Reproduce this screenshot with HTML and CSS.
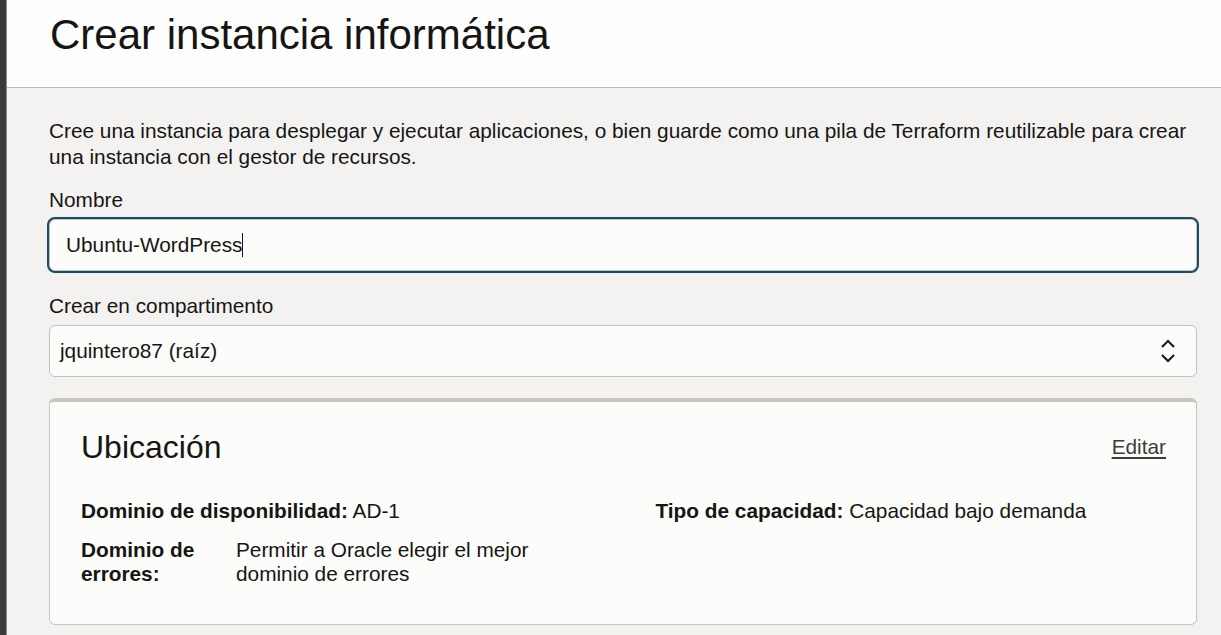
FILE: index.html
```html
<!DOCTYPE html>
<html>

	<head>
		<meta charset="UTF-8">
		<title>Crear instancia informática</title>
		<link rel="stylesheet" href="styles.css">
	</head>

	<body>
		<div class="shell">
			<div class="rail"></div>
			<div class="main">
				<div class="header">
					<h1>Crear instancia informática</h1>
				</div>
				<div class="content">
					<p class="intro">Cree una instancia para desplegar y ejecutar aplicaciones, o bien guarde como una pila de Terraform reutilizable para crear una instancia con el gestor de recursos.</p>

					<label class="label">Nombre</label>
					<div class="field focused">Ubuntu-WordPress<span class="caret"></span></div>

					<label class="label second">Crear en compartimento</label>
					<div class="field select">
						<span>jquintero87 (raíz)</span>
						<svg class="chevrons" width="16" height="26" viewBox="0 0 16 26">
							<polyline points="2,9 8,3 14,9" fill="none" stroke="#161513" stroke-width="2" />
							<polyline points="2,17 8,23 14,17" fill="none" stroke="#161513" stroke-width="2" />
						</svg>
					</div>

					<div class="card">
						<div class="card-head">
							<h2>Ubicación</h2>
							<a href="javascript:;" class="edit">Editar</a>
						</div>
						<div class="card-body">
							<div class="col">
								<div class="row"><b>Dominio de disponibilidad:</b> AD-1</div>
								<div class="row pair">
									<b class="pair-label">Dominio de errores:</b>
									<span>Permitir a Oracle elegir el mejor dominio de errores</span>
								</div>
							</div>
							<div class="col">
								<div class="row"><b>Tipo de capacidad:</b> Capacidad bajo demanda</div>
							</div>
						</div>
					</div>
				</div>
			</div>
		</div>
	</body>

</html>
```

FILE: styles.css
```css
* {
	margin: 0;
	padding: 0;
	box-sizing: border-box;
}

body {
	font-family: "Liberation Sans", Arial, sans-serif;
	color: #161513;
	background-color: #f3f2f1;
	font-size: 20.8px;
}

.shell {
	display: flex;
	min-height: 635px;
}

.rail {
	width: 7px;
	background-color: #3a3a3a;
	border-right: 1px solid #8c8c8c;
}

.main {
	flex: 1;
}

.header {
	height: 88px;
	background-color: #fefefe;
	border-bottom: 1px solid #b9b9b9;
	padding-left: 43px;
	padding-top: 11px;
}

.header h1 {
	font-size: 42px;
	font-weight: normal;
	line-height: 48px;
}

.content {
	padding: 30px 24px 0 42px;
}

.intro {
	line-height: 26px;
	margin-bottom: 18px;
}

.label {
	display: block;
	line-height: 24px;
	margin-bottom: 7px;
}

.label.second {
	margin-top: 23px;
}

.field {
	height: 52px;
	background-color: #fcfcfb;
	border: 1px solid #c4c0bb;
	border-radius: 6px;
	padding: 0 16px;
	display: flex;
	align-items: center;
}

.field.focused {
	box-shadow: 0 0 0 2px #1d4c61;
}

.caret {
	display: inline-block;
	width: 1px;
	height: 24px;
	background-color: #161513;
}

.field.select {
	justify-content: space-between;
	padding: 0 20px 0 10px;
}

.card {
	margin-top: 21px;
	background-color: #fcfcfb;
	border: 1px solid #c9c5c0;
	border-top: 4px solid #c9c5c0;
	border-radius: 6px;
	padding: 25px 30px 38px 31px;
}

.card-head {
	display: flex;
	justify-content: space-between;
	align-items: center;
}

.card-head h2 {
	font-size: 32px;
	font-weight: normal;
	line-height: 40px;
}

.edit {
	color: #3c3b39;
	text-decoration: underline;
	text-underline-offset: 3px;
}

.card-body {
	margin-top: 32px;
	display: grid;
	grid-template-columns: 1fr 1fr;
	column-gap: 64px;
}

.row {
	line-height: 24px;
}

.row + .row {
	margin-top: 15px;
}

.pair {
	display: grid;
	grid-template-columns: 135px 1fr;
	column-gap: 20px;
}
```
